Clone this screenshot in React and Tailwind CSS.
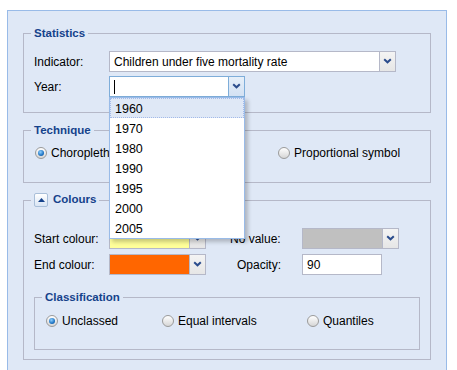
import React from "react";

const years = ["1960", "1970", "1980", "1990", "1995", "2000", "2005"];

const Chevron = () => (
  <svg width="9" height="6" viewBox="0 0 9 6" className="-mt-[2px]">
    <path d="M1.2 1.2 L4.5 4.3 L7.8 1.2" fill="none" stroke="#2b4c8c" strokeWidth="2" />
  </svg>
);

const Trigger = ({ focused }) => (
  <div
    className={`flex h-full w-[17px] shrink-0 items-center justify-center border ${
      focused
        ? "border-[#7eadd9] bg-gradient-to-b from-[#e6eff9] to-[#d3e1f3]"
        : "border-[#b5b8c8] bg-gradient-to-b from-[#f4f4f4] to-[#e6e6e6]"
    }`}
  >
    <Chevron />
  </div>
);

const Combo = ({ width, fill = "bg-white", focused, children }) => (
  <div className={`flex h-[21px] ${width}`}>
    <div
      className={`flex flex-1 items-center border-y border-l px-[4px] text-[12px] ${fill} ${
        focused ? "border-[#7eadd9]" : "border-[#b5b8c8]"
      }`}
    >
      {children}
    </div>
    <Trigger focused={focused} />
  </div>
);

const Radio = ({ checked, label }) => (
  <label className="flex items-center gap-[4px] text-[12px]">
    <span className="ml-[1px] flex h-[12px] w-[12px] items-center justify-center rounded-full border border-[#9a9a9a] bg-gradient-to-b from-[#ffffff] to-[#d6d6d6]">
      {checked && (
        <span className="h-[6px] w-[6px] rounded-full bg-[radial-gradient(circle_at_40%_35%,#8fd0ff,#1e74c4_60%,#124f8e)]" />
      )}
    </span>
    {label}
  </label>
);

const Legend = ({ children }) => (
  <legend className="ml-[-3px] px-[3px] text-[11.5px] font-bold leading-[14px] text-[#15428b]">{children}</legend>
);

const App = () => {
  return (
    <div className="h-[370px] overflow-hidden bg-white pt-[10px] font-['Liberation_Sans',Arial,sans-serif] text-black">
      <div className="ml-[7px] w-[440px] border border-[#99bbe8] bg-[#dfe8f6] px-[15px] pb-[30px] pt-[15px]">
        <fieldset className="border border-[#b5b8c8] px-[10px] pb-[15px] pt-[11px]">
          <Legend>Statistics</Legend>
          <div className="flex flex-col gap-[4px]">
            <div className="flex items-center">
              <span className="w-[75px] text-[12px]">Indicator:</span>
              <Combo width="w-[287px]">Children under five mortality rate</Combo>
            </div>
            <div className="flex items-center">
              <span className="w-[75px] text-[12px]">Year:</span>
              <div className="relative z-10">
                <Combo width="w-[136px]" focused>
                  <span className="h-[14px] w-px bg-black" />
                </Combo>
                <ul className="absolute left-0 top-[21px] w-[136px] border border-[#99bbe8] bg-white shadow-[3px_3px_4px_rgba(0,0,0,0.22)]">
                  {years.map((y, i) => (
                    <li
                      key={y}
                      className={`h-[20px] border px-[4px] pt-[1px] text-[12.5px] leading-[18px] ${
                        i === 0 ? "border-dotted border-[#a3bae9] bg-[#dfe8f6]" : "border-transparent"
                      }`}
                    >
                      {y}
                    </li>
                  ))}
                </ul>
              </div>
            </div>
          </div>
        </fieldset>

        <fieldset className="mt-[10px] border border-[#b5b8c8] px-[10px] pb-[21px] pt-[8px]">
          <Legend>Technique</Legend>
          <div className="flex h-[16px] items-center">
            <div className="w-[243px]">
              <Radio checked label="Choropleth" />
            </div>
            <Radio label="Proportional symbol" />
          </div>
        </fieldset>

        <fieldset className="mt-[10px] border border-[#b5b8c8] px-[10px] pb-[9px] pt-[21px]">
          <legend className="ml-[-3px] flex h-[14px] items-center gap-[5px] px-[3px] text-[11.5px] font-bold text-[#15428b]">
            <span className="flex h-[14px] w-[14px] items-center justify-center rounded-[2px] border border-[#a9bfd9] bg-gradient-to-b from-[#ffffff] to-[#d9e5f4]">
              <svg width="7" height="4" viewBox="0 0 7 4">
                <path d="M0 4 L3.5 0 L7 4 Z" fill="#15428b" />
              </svg>
            </span>
            Colours
          </legend>
          <div className="flex flex-col gap-[5px]">
            <div className="flex items-center">
              <span className="w-[75px] text-[12px]">Start colour:</span>
              <Combo width="w-[97px]" fill="bg-[#ffff99]" />
              <span className="ml-[24px] w-[72px] text-[12px]">No value:</span>
              <Combo width="w-[97px]" fill="bg-[#c0c0c0]" />
            </div>
            <div className="flex items-center">
              <span className="w-[75px] text-[12px]">End colour:</span>
              <Combo width="w-[97px]" fill="bg-[#ff6600]" />
              <span className="ml-[31px] w-[65px] text-[12px]">Opacity:</span>
              <div className="flex h-[21px] w-[80px] items-center border border-[#b5b8c8] bg-white px-[4px] text-[12px]">
                90
              </div>
            </div>
          </div>

          <fieldset className="mt-[15px] border border-[#b5b8c8] px-[10px] pb-[20px] pt-[9px]">
            <Legend>Classification</Legend>
            <div className="flex h-[16px] items-center">
              <div className="w-[116px]">
                <Radio checked label="Unclassed" />
              </div>
              <div className="w-[145px]">
                <Radio label="Equal intervals" />
              </div>
              <Radio label="Quantiles" />
            </div>
          </fieldset>
        </fieldset>
      </div>
    </div>
  );
};

export default App;
